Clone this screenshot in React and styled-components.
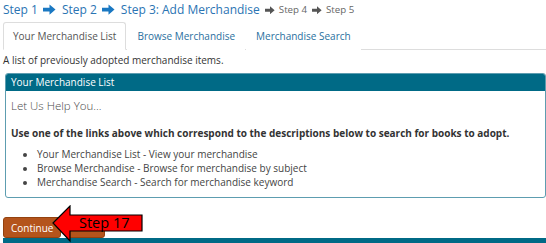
import React from 'react';
import styled, { createGlobalStyle } from 'styled-components';

const GlobalStyle = createGlobalStyle`
    html, body {
        margin: 0;
        padding: 0;
        background: #fff;
    }
    body {
        font-family: "Open Sans", "DejaVu Sans", sans-serif;
        font-size: 10px;
        color: #333;
    }
`;

const steps = [
    { label: 'Step 1', done: true },
    { label: 'Step 2', done: true },
    { label: 'Step 3: Add Merchandise', done: true },
    { label: 'Step 4', done: false },
    { label: 'Step 5', done: false },
];

const tabs = ['Your Merchandise List', 'Browse Merchandise', 'Merchandise Search'];

const helpItems = [
    'Your Merchandise List - View your merchandise',
    'Browse Merchandise - Browse for merchandise by subject',
    'Merchandise Search - Search for merchandise keyword',
];

// bold "arrow-right" glyph used between the steps
const ArrowIcon = ({ size }) => (
    <svg width={size} height={size * 12 / 14} viewBox="0 0 14 12">
        <polygon points="0,4 7,4 7,0.5 13.5,6 7,11.5 7,8 0,8" fill="currentColor" />
    </svg>
);

export default class App extends React.Component {

    render() {
        return (
            <Page>
                <GlobalStyle />
                <StepBar>
                    {steps.map((step, index) => (
                        <React.Fragment key={step.label}>
                            {index > 0 &&
                                <StepArrow current={step.done ? 1 : 0}>
                                    <ArrowIcon size={step.done ? 13 : 10} />
                                </StepArrow>
                            }
                            <StepLabel current={step.done ? 1 : 0}>{step.label}</StepLabel>
                        </React.Fragment>
                    ))}
                </StepBar>

                <TabBar>
                    {tabs.map((tab, index) => (
                        <Tab key={tab} active={index === 0 ? 1 : 0}>{tab}</Tab>
                    ))}
                </TabBar>

                <Description>A list of previously adopted merchandise items.</Description>

                <Panel>
                    <PanelHeader>Your Merchandise List</PanelHeader>
                    <PanelBody>
                        <HelpTitle>Let Us Help You...</HelpTitle>
                        <HelpIntro>
                            Use one of the links above which correspond to the descriptions below to search for books to adopt.
                        </HelpIntro>
                        <HelpList>
                            {helpItems.map((item) => <li key={item}>{item}</li>)}
                        </HelpList>
                    </PanelBody>
                </Panel>

                <ButtonRow>
                    <Button>Continue</Button>
                    {/* second button sits under the callout, its label hidden by it */}
                    <Button aria-label="Back" wide={40} />
                    <Callout>
                        <svg width="92" height="38" viewBox="0 0 92 38">
                            <polygon
                                points="1,18 18,1 18,10 90,10 90,26 18,26 18,36"
                                fill="#ff0000"
                                stroke="#000"
                                strokeWidth="1.2" />
                        </svg>
                        <CalloutText>Step 17</CalloutText>
                    </Callout>
                </ButtonRow>

                <Footer />
            </Page>
        );
    }
}

// ============= Styled Components ==============

const Page = styled.div`
    width: 543px;
    padding-left: 3px;
`;

const StepBar = styled.div`
    display: flex;
    align-items: center;
    height: 19px;
    white-space: nowrap;
`;

const StepLabel = styled.span`
    font-size: ${props => props.current ? '12px' : '9.7px'};
    color: ${props => props.current ? '#2a74b3' : '#666'};
    line-height: 19px;
`;

const StepArrow = styled.span`
    display: inline-flex;
    align-items: center;
    margin: ${props => props.current ? '1px 6px 0 5px' : '1px 4px 0 5px'};
    color: ${props => props.current ? '#1a78c2' : '#555'};

    svg {
        display: block;
    }
`;

const TabBar = styled.div`
    display: flex;
    margin-top: 3px;
    border-bottom: 1px solid #ddd;
`;

const Tab = styled.div`
    height: 26px;
    margin-right: 1px;
    margin-bottom: -1px;
    padding: 0 9px;
    display: flex;
    align-items: center;
    font-size: 10px;
    color: ${props => props.active ? '#555' : '#2a6f9e'};
    background: #fff;
    border: 1px solid ${props => props.active ? '#ddd' : 'transparent'};
    border-bottom-color: ${props => props.active ? '#fff' : 'transparent'};
    border-radius: 3px 3px 0 0;
`;

const Description = styled.p`
    margin: 3px 0 0;
    line-height: 14px;
    font-size: 10px;
    color: #333;
`;

const Panel = styled.div`
    margin: 6px 0 0 2px;
    border: 1px solid #5d9db0;
    border-radius: 3px;
    overflow: hidden;
`;

const PanelHeader = styled.div`
    background: #006a86;
    color: #fff;
    font-size: 10px;
    line-height: 17px;
    padding: 0 5px;
`;

const PanelBody = styled.div`
    padding: 7px 5px 8px;
`;

const HelpTitle = styled.div`
    font-size: 11.5px;
    font-weight: 300;
    color: #4a4a4a;
    line-height: 16px;
`;

const HelpIntro = styled.p`
    margin: 12px 0 0;
    font-size: 10px;
    font-weight: 700;
    color: #333;
    line-height: 14px;
`;

const HelpList = styled.ul`
    margin: 7px 0 0;
    padding-left: 26px;
    font-size: 10px;
    line-height: 14px;
    color: #444;
`;

const ButtonRow = styled.div`
    position: relative;
    display: flex;
    gap: 4px;
    margin-top: 19px;
`;

const Button = styled.button`
    height: 21px;
    width: ${props => props.wide ? props.wide + 'px' : 'auto'};
    padding: 0 7px;
    font-family: inherit;
    font-size: 10px;
    color: #fff;
    background: #b4541c;
    border: 1px solid #94420f;
    border-radius: 3px;
`;

const Callout = styled.div`
    position: absolute;
    left: 49px;
    top: -12px;
    width: 92px;
    height: 38px;

    svg {
        display: block;
    }
`;

const CalloutText = styled.span`
    position: absolute;
    left: 27px;
    top: 8px;
    font-size: 14.5px;
    line-height: 20px;
    color: #000;
`;

const Footer = styled.div`
    height: 5px;
    background: #006a86;
`;
